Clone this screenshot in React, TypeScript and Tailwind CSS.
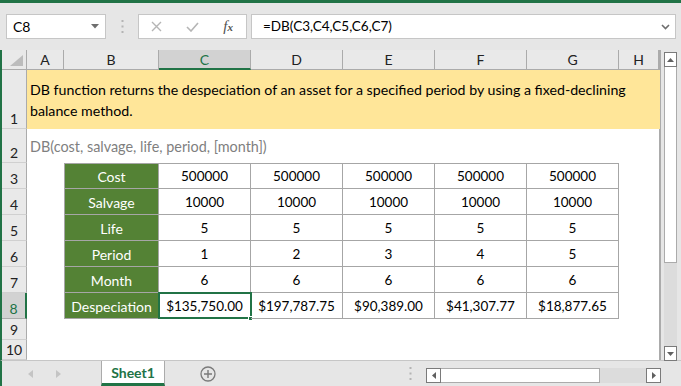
import React from "react";

const cols = [
  { letter: "A", w: "w-[37px]" },
  { letter: "B", w: "w-[95px]" },
  { letter: "C", w: "w-[92px]" },
  { letter: "D", w: "w-[92px]" },
  { letter: "E", w: "w-[92px]" },
  { letter: "F", w: "w-[92px]" },
  { letter: "G", w: "w-[92px]" },
  { letter: "H", w: "w-[40px]" },
];

const labels = ["Cost", "Salvage", "Life", "Period", "Month", "Despeciation"];

const data = [
  ["500000", "10000", "5", "1", "6", "$135,750.00"],
  ["500000", "10000", "5", "2", "6", "$197,787.75"],
  ["500000", "10000", "5", "3", "6", "$90,389.00"],
  ["500000", "10000", "5", "4", "6", "$41,307.77"],
  ["500000", "10000", "5", "5", "6", "$18,877.65"],
];

const font = "font-['Lato','Open_Sans',sans-serif]";

const RowHead = ({ n, h, active }: { n: number; h: string; active?: boolean }) => (
  <div
    className={`${h} w-[25px] shrink-0 flex items-end justify-center pb-[1px] text-[14px] leading-[16px] border-b ${
      active
        ? "bg-[#d2d2d2] text-[#217346] border-r-2 border-r-[#217346] border-b-[#ababab]"
        : "bg-[#e9e9e9] text-[#222] border-r border-r-[#ababab] border-b-[#d0d0d0]"
    }`}
  >
    {n}
  </div>
);

export default function App() {
  return (
    <div className={`w-[681px] h-[386px] overflow-hidden bg-[#e6e6e6] ${font} text-black`}>
      <div className="h-[3px] bg-[#217346]" />

      {/* formula bar */}
      <div className="h-[47px] flex items-start pt-[11px]">
        <div className="ml-[6px] w-[100px] h-[25px] bg-white border border-[#c6c6c6] flex items-center justify-between pl-[6px] pr-[6px]">
          <span className="text-[14px]">C8</span>
          <svg width="8" height="5" viewBox="0 0 8 5">
            <path d="M0 0h8L4 4.5z" fill="#6e6e6e" />
          </svg>
        </div>
        <div className="w-[32px] flex justify-center pt-[6px]">
          <svg width="3" height="13" viewBox="0 0 3 13">
            <rect x="0.5" y="0" width="2" height="2" fill="#b4b4b4" />
            <rect x="0.5" y="5.5" width="2" height="2" fill="#b4b4b4" />
            <rect x="0.5" y="11" width="2" height="2" fill="#b4b4b4" />
          </svg>
        </div>
        <div className="w-[109px] h-[25px] bg-white border border-[#c6c6c6] flex items-center">
          <div className="w-[36px] flex justify-center">
            <svg width="11" height="11" viewBox="0 0 11 11">
              <path d="M1 1l9 9M10 1l-9 9" stroke="#b5b5b5" strokeWidth="1.4" />
            </svg>
          </div>
          <div className="w-[36px] flex justify-center">
            <svg width="13" height="10" viewBox="0 0 13 10">
              <path d="M1 5l4 4 7-8" stroke="#b5b5b5" strokeWidth="1.6" fill="none" />
            </svg>
          </div>
          <div className="w-[36px] flex justify-center items-baseline font-['Liberation_Serif',serif] italic text-[#505050]">
            <span className="text-[15px]">f</span>
            <span className="text-[11px] font-bold">x</span>
          </div>
        </div>
        <div className="ml-[4px] w-[425px] h-[25px] bg-white border border-[#c6c6c6] flex items-center justify-between pl-[11px] pr-[5px]">
          <span className="text-[13.5px]">=DB(C3,C4,C5,C6,C7)</span>
          <svg width="9" height="6" viewBox="0 0 9 6">
            <path d="M1 1l3.5 3.5L8 1" stroke="#6e6e6e" strokeWidth="1.6" fill="none" />
          </svg>
        </div>
      </div>

      {/* sheet */}
      <div className="flex border-l-2 border-[#217346] h-[310px]">
        <div className="w-[659px] bg-white border-r-2 border-[#ababab] flex flex-col">
          {/* column headers */}
          <div className="flex h-[20px] bg-[#e9e9e9] text-[14px] text-[#222]">
            <div className="w-[25px] shrink-0 border-r border-b border-[#ababab] flex items-end justify-end pr-[3px] pb-[3px]">
              <svg width="13" height="11" viewBox="0 0 13 11">
                <path d="M13 0v11H0z" fill="#bcbcbc" />
              </svg>
            </div>
            {cols.map((c) =>
              c.letter === "C" ? (
                <div
                  key={c.letter}
                  className={`${c.w} shrink-0 flex items-center justify-center bg-[#d2d2d2] text-[#217346] border-r border-[#ababab] border-b-2 border-b-[#217346]`}
                >
                  {c.letter}
                </div>
              ) : (
                <div
                  key={c.letter}
                  className={`${c.w} shrink-0 flex items-center justify-center border-r border-b border-[#ababab]`}
                >
                  {c.letter}
                </div>
              )
            )}
          </div>

          {/* row 1 */}
          <div className="flex h-[59px]">
            <RowHead n={1} h="h-[59px]" />
            <div className="flex-1 bg-[#ffe699] flex items-center pl-[3px]">
              <p className="w-[630px] text-[14.2px] leading-[21px] whitespace-nowrap">
                DB function returns the despeciation of an asset for a specified period by using a fixed-declining
                <br />
                balance method.
              </p>
            </div>
          </div>

          {/* row 2 */}
          <div className="flex h-[34px]">
            <RowHead n={2} h="h-[34px]" />
            <div className="flex-1 flex items-center pl-[3px] pt-[2px] text-[14.4px] text-[#7f7f7f]">
              DB(cost, salvage, life, period, [month])
            </div>
          </div>

          {/* rows 3-8 table */}
          {labels.map((label, r) => (
            <div key={label} className="flex h-[26px]">
              <RowHead n={r + 3} h="h-[26px]" active={r === 5} />
              <div className="w-[37px] shrink-0" />
              <div
                className={`w-[95px] shrink-0 bg-[#548235] text-white text-[14px] flex items-center justify-center pt-[1px] border-l border-r border-b border-[#a6a6a6] ${
                  r === 0 ? "border-t" : ""
                }`}
              >
                {label}
              </div>
              {data.map((col, ci) => (
                <div
                  key={ci}
                  className={`w-[92px] shrink-0 relative text-[13.5px] flex items-center justify-center pt-[1px] border-r border-b border-[#a6a6a6] ${
                    r === 0 ? "border-t" : ""
                  }`}
                >
                  {col[r]}
                  {r === 5 && ci === 0 && (
                    <>
                      <div className="absolute -left-[1px] -top-[1px] w-[94px] h-[27px] border-2 border-[#217346]" />
                      <div className="absolute -right-[3px] -bottom-[3px] w-[5px] h-[5px] bg-[#217346] border border-white" />
                    </>
                  )}
                </div>
              ))}
            </div>
          ))}

          {/* rows 9-10 */}
          <div className="flex h-[21px]">
            <RowHead n={9} h="h-[21px]" />
          </div>
          <div className="flex h-[20px]">
            <RowHead n={10} h="h-[20px]" />
          </div>
        </div>

        {/* vertical scrollbar */}
        <div className="w-[20px] pl-[3px] pt-[2px]">
          <div className="w-[13px] h-[309px] flex flex-col">
            <div className="h-[15px] bg-white border border-[#7a7a7a] flex items-center justify-center">
              <svg width="7" height="4" viewBox="0 0 7 4">
                <path d="M0 4L3.5 0 7 4z" fill="#606060" />
              </svg>
            </div>
            <div className="h-[196px] bg-white border-x border-b border-[#ababab]" />
            <div className="flex-1 bg-[#dcdcdc]" />
            <div className="h-[15px] bg-white border border-[#7a7a7a] flex items-center justify-center">
              <svg width="7" height="4" viewBox="0 0 7 4">
                <path d="M0 0h7L3.5 4z" fill="#606060" />
              </svg>
            </div>
          </div>
        </div>
      </div>

      {/* tab bar */}
      <div className="flex h-[26px] border-l-2 border-[#217346] border-t border-t-[#c6c6c6]">
        <div className="w-[99px] flex items-center">
          <svg className="ml-[26px]" width="5" height="8" viewBox="0 0 5 8">
            <path d="M5 0v8L0 4z" fill="#c4c4c4" />
          </svg>
          <svg className="ml-[23px]" width="5" height="8" viewBox="0 0 5 8">
            <path d="M0 0v8l5-4z" fill="#c4c4c4" />
          </svg>
        </div>
        <div className="w-[64px] bg-white border-x border-[#ababab] border-b-[3px] border-b-[#217346] flex items-center justify-center text-[14px] font-bold text-[#217346]">
          Sheet1
        </div>
        <div className="w-[86px] flex items-center">
          <svg className="ml-[35px]" width="16" height="16" viewBox="0 0 16 16">
            <circle cx="8" cy="8" r="7" fill="none" stroke="#7a7a7a" strokeWidth="1.3" />
            <path d="M8 4v8M4 8h8" stroke="#7a7a7a" strokeWidth="1.4" />
          </svg>
        </div>
        <div className="w-[175px] flex items-center justify-end pr-[14px]">
          <svg width="3" height="13" viewBox="0 0 3 13">
            <rect x="0.5" y="0" width="2" height="2" fill="#b4b4b4" />
            <rect x="0.5" y="5.5" width="2" height="2" fill="#b4b4b4" />
            <rect x="0.5" y="11" width="2" height="2" fill="#b4b4b4" />
          </svg>
        </div>
        <div className="w-[235px] pt-[7px]">
          <div className="h-[15px] flex">
            <div className="w-[15px] bg-white border border-[#7a7a7a] flex items-center justify-center">
              <svg width="4" height="7" viewBox="0 0 4 7">
                <path d="M4 0v7L0 3.5z" fill="#606060" />
              </svg>
            </div>
            <div className="w-[159px] bg-white border-y border-r border-[#ababab]" />
            <div className="flex-1 bg-[#dcdcdc]" />
            <div className="w-[15px] bg-white border border-[#7a7a7a] flex items-center justify-center">
              <svg width="4" height="7" viewBox="0 0 4 7">
                <path d="M0 0v7l4-3.5z" fill="#606060" />
              </svg>
            </div>
          </div>
        </div>
      </div>
    </div>
  );
}
